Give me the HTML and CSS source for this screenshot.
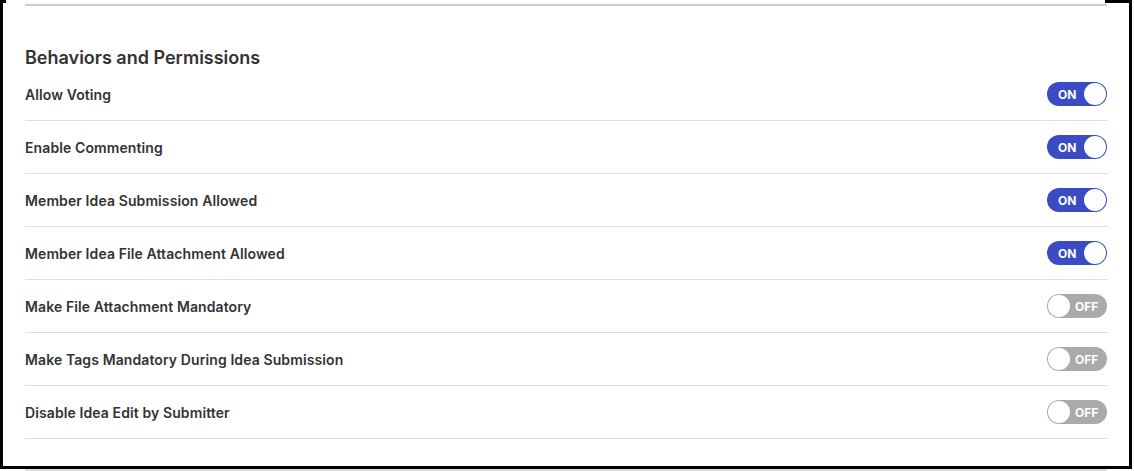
FILE: index.html
```html
<!DOCTYPE html>
<html lang="en">
<head>
  <meta charset="UTF-8">
  <meta name="viewport" content="width=device-width, initial-scale=1.0">
  <title>Behaviors and Permissions</title>
  <link rel="stylesheet" href="styles.css">
</head>
<body>
  <div class="frame">
    <div class="top-rule"></div>

    <h2 class="section-title">Behaviors and Permissions</h2>

    <div class="settings">
      <div class="setting-row">
        <span class="setting-label">Allow Voting</span>
        <span class="toggle on"><span class="toggle-text">ON</span><span class="knob"></span></span>
      </div>
      <div class="setting-row">
        <span class="setting-label">Enable Commenting</span>
        <span class="toggle on"><span class="toggle-text">ON</span><span class="knob"></span></span>
      </div>
      <div class="setting-row">
        <span class="setting-label">Member Idea Submission Allowed</span>
        <span class="toggle on"><span class="toggle-text">ON</span><span class="knob"></span></span>
      </div>
      <div class="setting-row">
        <span class="setting-label">Member Idea File Attachment Allowed</span>
        <span class="toggle on"><span class="toggle-text">ON</span><span class="knob"></span></span>
      </div>
      <div class="setting-row">
        <span class="setting-label">Make File Attachment Mandatory</span>
        <span class="toggle off"><span class="knob"></span><span class="toggle-text">OFF</span></span>
      </div>
      <div class="setting-row">
        <span class="setting-label">Make Tags Mandatory During Idea Submission</span>
        <span class="toggle off"><span class="knob"></span><span class="toggle-text">OFF</span></span>
      </div>
      <div class="setting-row">
        <span class="setting-label">Disable Idea Edit by Submitter</span>
        <span class="toggle off"><span class="knob"></span><span class="toggle-text">OFF</span></span>
      </div>
    </div>
  </div>
  <div class="next-rule"></div>
</body>
</html>
```

FILE: styles.css
```css
body {
  font-family: Inter, "Noto Sans", sans-serif;
  margin: 0;
  background: #ffffff;
  color: #333333;
}

.frame {
  position: relative;
  box-sizing: border-box;
  width: 1132px;
  height: 469px;
  padding: 4px 22px 0 22px;
  border: 3px solid #000000;
  border-top: none;
  background: #ffffff;
}

/* the little bit of top edge that shows at the corners */
.frame::before,
.frame::after {
  content: "";
  position: absolute;
  top: 0;
  height: 3px;
  background: #000000;
}

.frame::before {
  left: -3px;
  width: 6px;
}

.frame::after {
  right: -3px;
  width: 27px;
}

.top-rule {
  height: 2px;
  background: #cccccc;
}

.section-title {
  margin: 41px 0 0 0;
  font-size: 18px;
  font-weight: 600;
  line-height: 21px;
  color: #333333;
}

.settings {
  display: flex;
  flex-direction: column;
}

.setting-row {
  display: flex;
  align-items: center;
  justify-content: space-between;
  height: 52px;
  border-bottom: 1px solid #dddddd;
}

.setting-label {
  font-size: 14px;
  font-weight: 600;
  letter-spacing: 0.1px;
  color: #333333;
}

.toggle {
  display: flex;
  align-items: center;
  box-sizing: border-box;
  width: 60px;
  height: 24px;
  padding: 1px;
  border-radius: 12px;
  font-size: 12px;
  font-weight: 700;
  color: #ffffff;
}

.toggle.on {
  background: #3a4bc4;
  justify-content: space-between;
  padding-left: 11px;
}

.toggle.off {
  background: #aaaaaa;
  gap: 5px;
}

.knob {
  width: 22px;
  height: 22px;
  border-radius: 50%;
  background: #ffffff;
}

.next-rule {
  height: 2px;
  margin: 0 27px 0 25px;
  background: #dddddd;
}
```
